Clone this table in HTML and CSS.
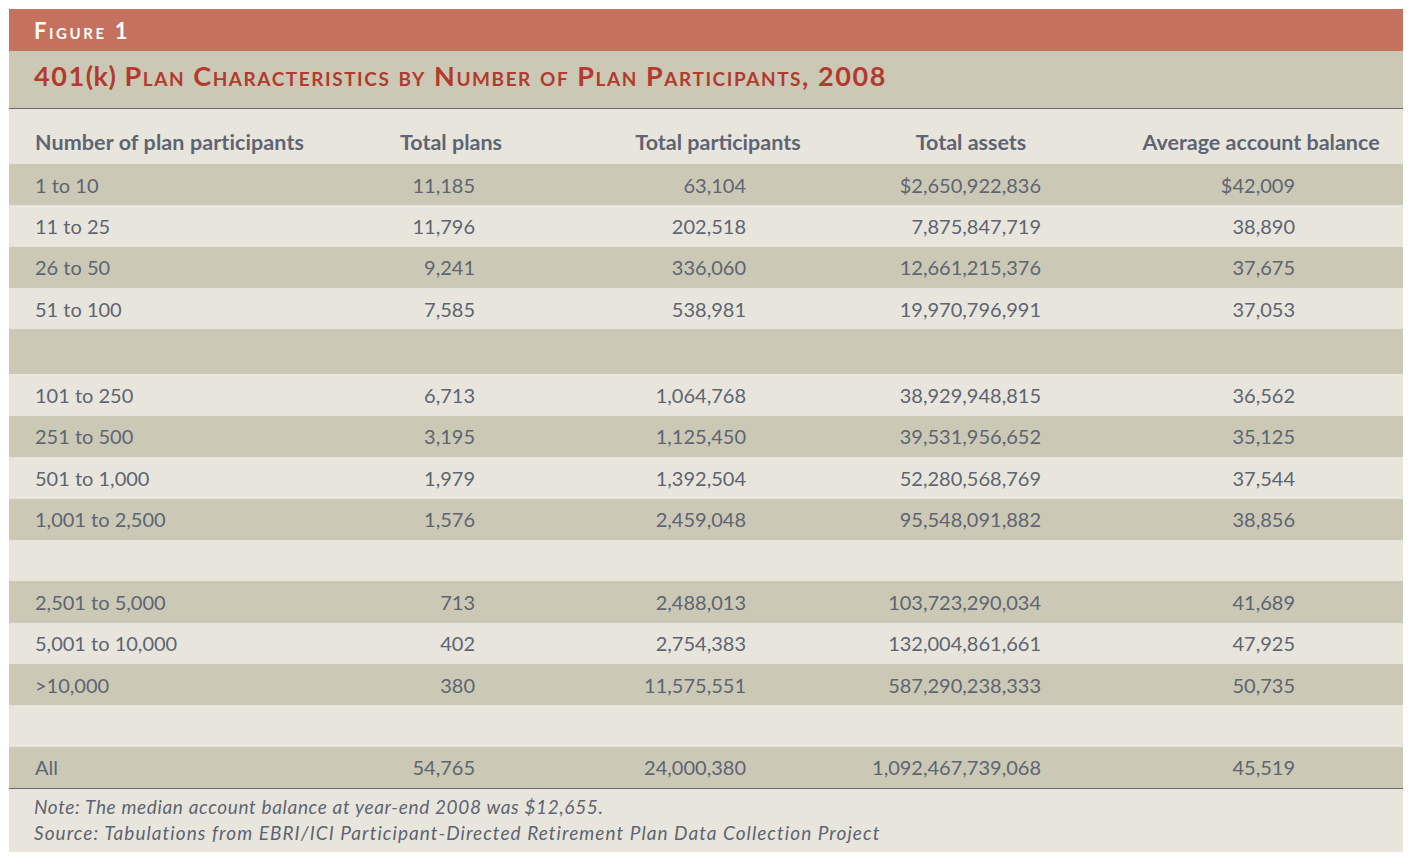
FILE: index.html
```html
<!DOCTYPE html>
<html lang="en">
<head>
<meta charset="utf-8">
<title>Figure 1</title>
<link rel="stylesheet" href="styles.css">
</head>
<body>
<div class="figure">
  <div class="fig-label">Figure 1</div>
  <div class="fig-title">401<span class="lower">(k)</span> Plan Characteristics by Number of Plan Participants, 2008</div>
  <div class="table">
    <div class="row head">
      <div class="c1">Number of plan participants</div>
      <div class="c2">Total plans</div>
      <div class="c3">Total participants</div>
      <div class="c4">Total assets</div>
      <div class="c5">Average account balance</div>
    </div>
    <div class="row dark"><div class="c1">1 to 10</div><div class="c2">11,185</div><div class="c3">63,104</div><div class="c4">$2,650,922,836</div><div class="c5">$42,009</div></div>
    <div class="row light"><div class="c1">11 to 25</div><div class="c2">11,796</div><div class="c3">202,518</div><div class="c4">7,875,847,719</div><div class="c5">38,890</div></div>
    <div class="row dark"><div class="c1">26 to 50</div><div class="c2">9,241</div><div class="c3">336,060</div><div class="c4">12,661,215,376</div><div class="c5">37,675</div></div>
    <div class="row light"><div class="c1">51 to 100</div><div class="c2">7,585</div><div class="c3">538,981</div><div class="c4">19,970,796,991</div><div class="c5">37,053</div></div>
    <div class="row dark spacer tall"></div>
    <div class="row light"><div class="c1">101 to 250</div><div class="c2">6,713</div><div class="c3">1,064,768</div><div class="c4">38,929,948,815</div><div class="c5">36,562</div></div>
    <div class="row dark"><div class="c1">251 to 500</div><div class="c2">3,195</div><div class="c3">1,125,450</div><div class="c4">39,531,956,652</div><div class="c5">35,125</div></div>
    <div class="row light"><div class="c1">501 to 1,000</div><div class="c2">1,979</div><div class="c3">1,392,504</div><div class="c4">52,280,568,769</div><div class="c5">37,544</div></div>
    <div class="row dark"><div class="c1">1,001 to 2,500</div><div class="c2">1,576</div><div class="c3">2,459,048</div><div class="c4">95,548,091,882</div><div class="c5">38,856</div></div>
    <div class="row light spacer"></div>
    <div class="row dark"><div class="c1">2,501 to 5,000</div><div class="c2">713</div><div class="c3">2,488,013</div><div class="c4">103,723,290,034</div><div class="c5">41,689</div></div>
    <div class="row light"><div class="c1">5,001 to 10,000</div><div class="c2">402</div><div class="c3">2,754,383</div><div class="c4">132,004,861,661</div><div class="c5">47,925</div></div>
    <div class="row dark"><div class="c1">&gt;10,000</div><div class="c2">380</div><div class="c3">11,575,551</div><div class="c4">587,290,238,333</div><div class="c5">50,735</div></div>
    <div class="row light spacer"></div>
    <div class="row dark"><div class="c1">All</div><div class="c2">54,765</div><div class="c3">24,000,380</div><div class="c4">1,092,467,739,068</div><div class="c5">45,519</div></div>
  </div>
  <div class="notes">
    <p>Note: The median account balance at year-end 2008 was $12,655.</p>
    <p class="wide">Source: Tabulations from EBRI/ICI Participant-Directed Retirement Plan Data Collection Project</p>
  </div>
</div>
</body>
</html>
```
FILE: styles.css
```css
html, body {
  margin: 0;
  padding: 0;
  background: #ffffff;
}
body {
  padding: 9px 10px 0 9px;
  font-family: "Lato", "Open Sans", "Liberation Sans", sans-serif;
  color: #5e6473;
}
.figure {
  width: 1394px;
  background: #e8e6dc;
}
.fig-label {
  height: 42px;
  background: #c4715d;
  color: #ffffff;
  font-size: 22px;
  font-weight: 700;
  font-variant: small-caps;
  letter-spacing: 2.6px;
  line-height: 44px;
  padding-left: 25px;
  box-sizing: border-box;
}
.fig-title {
  height: 58px;
  background: #cbc9b5;
  color: #b23a2f;
  font-size: 27px;
  font-weight: 700;
  font-variant: small-caps;
  letter-spacing: 1.55px;
  line-height: 50px;
  padding-left: 25px;
  box-sizing: border-box;
  border-bottom: 1px solid #676b70;
}
.fig-title .lower {
  font-variant: normal;
  letter-spacing: 0.5px;
}
.row {
  display: grid;
  grid-template-columns: 367px 150px 310px 270px 297px;
  height: 41.36px;
  align-items: center;
  font-size: 20px;
}
.row.dark { background: #cbc9b5; }
.row.light { background: #e8e6dc; }
.row.tall { height: 45px; }
.row.head {
  height: 55px;
  font-weight: 700;
  font-size: 21.5px;
  padding-top: 11px;
  box-sizing: border-box;
}
.row.head .c1 { letter-spacing: 0.1px; }
.c1 { padding-left: 26px; }
.c2 { text-align: right; padding-right: 51px; }
.c3 { text-align: right; padding-right: 90px; }
.c4 { text-align: right; padding-right: 65px; }
.c5 { text-align: right; padding-right: 108px; }
.head .c2, .head .c3, .head .c4, .head .c5 {
  text-align: center;
  padding-right: 0;
}
.head .c3 { padding-left: 74px; }
.head .c5 { padding-left: 13px; }
.notes {
  border-top: 1px solid #676b70;
  height: 64px;
  box-sizing: border-box;
  padding: 5px 0 0 25px;
  font-style: italic;
  font-size: 19px;
  letter-spacing: 0.65px;
  line-height: 26px;
}
.notes p { margin: 0; }
.notes .wide { letter-spacing: 1.05px; }
```
